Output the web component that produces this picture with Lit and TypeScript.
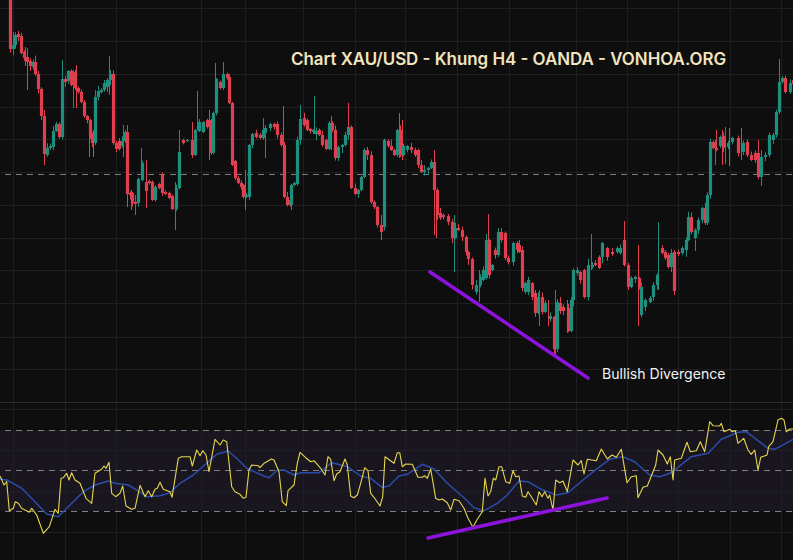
import { LitElement, html, css, svg } from "lit";
import { customElement } from "lit/decorators.js";

type C = [number, number, number, number];
// x, top, bottom, colour (1 green, 0 red)
const candles: C[] = [
  [10,0,49,0],[13,45,49,1],[15,35,45,1],[18,34,37,0],[21,36,53,0],[24,52,58,0],[27,57,62,0],[30,61,66,0],[33,62,67,1],[35,62,74,0],
  [38,74,89,0],[41,89,116,0],[44,116,154,0],[47,148,155,1],[50,146,148,1],[53,131,147,1],[56,124,131,1],[59,124,137,0],[62,79,137,1],[65,79,82,0],
  [68,71,81,1],[71,71,85,0],[75,72,88,0],[78,88,92,0],[81,92,102,0],[84,102,116,0],[87,116,120,0],[90,120,135,0],[92,135,143,0],[95,97,143,1],
  [98,91,97,1],[101,90,92,1],[104,83,90,1],[107,80,87,1],[110,74,80,1],[113,74,143,0],[116,143,149,0],[119,141,149,0],[122,141,146,1],[125,132,141,1],
  [127,132,194,0],[130,193,195,0],[132,193,203,0],[135,202,204,0],[138,179,203,1],[142,163,180,1],[146,182,191,0],[149,181,183,0],[152,182,200,0],[155,187,200,1],
  [159,184,188,0],[162,175,193,0],[165,192,194,0],[169,193,198,0],[172,196,209,0],[176,188,209,1],[179,152,188,1],[183,140,143,0],[187,140,141,1],[192,140,155,0],
  [195,130,155,1],[199,122,131,1],[203,122,132,1],[207,120,127,0],[211,120,153,0],[213,113,153,1],[216,79,113,1],[220,82,88,0],[223,74,88,1],[227,74,78,0],
  [229,77,103,0],[232,103,165,0],[235,161,178,0],[238,178,183,0],[241,183,187,0],[243,185,197,0],[246,195,197,1],[249,145,197,1],[252,134,145,1],[256,133,137,0],
  [260,135,138,0],[263,130,138,1],[265,128,133,1],[270,124,128,1],[274,124,127,0],[277,124,135,0],[281,135,145,0],[284,145,197,0],[287,197,205,0],[290,200,205,0],
  [291,185,205,1],[294,183,185,1],[297,140,184,1],[300,119,140,1],[304,118,125,0],[307,120,130,0],[310,129,131,0],[313,130,132,1],[316,131,134,1],[319,130,135,0],
  [322,135,145,0],[326,140,149,0],[329,123,149,1],[332,123,130,0],[335,130,158,0],[338,147,158,1],[342,145,147,1],[345,135,145,1],[348,127,135,1],[351,127,188,0],
  [355,188,194,0],[358,190,194,1],[361,177,190,1],[364,150,177,1],[367,150,155,0],[371,155,202,0],[374,202,207,0],[377,207,225,0],[381,225,232,0],[384,140,227,1],
  [388,141,146,0],[391,146,150,0],[394,150,155,0],[397,130,155,1],[400,130,155,0],[403,146,155,1],[407,146,150,1],[411,147,150,0],[415,150,155,0],[418,150,165,0],
  [421,165,172,0],[424,170,172,1],[428,168,170,1],[431,162,168,1],[434,162,190,0],[437,190,215,0],[440,213,218,0],[443,215,217,0],[448,216,222,0],[452,222,238,0],
  [455,228,238,1],[458,228,230,0],[462,230,237,0],[466,237,252,0],[468,252,259,0],[472,259,285,0],[476,285,292,1],[480,277,285,1],[483,270,280,1],[486,240,278,1],
  [489,240,275,0],[492,265,270,1],[495,250,255,0],[498,232,255,1],[501,232,240,0],[505,233,258,0],[508,258,262,0],[513,243,262,1],[517,243,250,0],[519,245,252,0],
  [522,250,288,0],[525,283,292,1],[528,280,292,1],[532,283,297,0],[535,293,313,0],[538,297,313,1],[542,297,312,0],[545,303,312,1],[550,316,319,1],
  [554,317,349,0],[557,302,349,1],[560,303,311,0],[563,307,311,0],[568,308,331,0],[571,300,331,1],[573,270,300,1],[577,270,273,1],[580,272,280,0],[584,270,297,0],
  [588,265,297,1],[592,265,267,1],[595,263,265,0],[599,257,268,0],[602,243,257,1],[607,248,257,0],[612,252,254,0],[617,248,252,1],[620,248,253,1],[624,240,265,0],
  [628,265,287,0],[631,278,287,1],[635,277,279,1],[639,278,287,0],[641,287,315,1],[645,300,307,1],[650,298,302,1],[653,285,297,1],[657,275,285,1],[662,248,253,0],
  [665,252,258,0],[668,255,267,0],[671,253,267,1],[674,252,291,0],[678,252,254,0],[682,248,253,1],[686,240,250,1],[688,217,240,1],[691,217,232,0],[695,230,238,1],
  [698,220,230,1],[702,208,220,1],[705,208,223,0],[707,195,223,1],[710,142,195,1],[713,142,148,0],[716,148,150,0],[720,137,146,1],[723,136,148,0],[728,143,147,1],
  [732,138,142,1],[738,138,153,0],[743,143,152,1],[747,142,155,0],[751,155,160,0],[755,153,160,0],[758,153,177,0],[761,157,177,1],[765,155,157,1],[769,135,155,1],
  [773,135,140,1],[776,112,135,1],[779,82,112,1],[782,78,82,1],[785,78,92,0],[790,83,92,1],[793,80,84,0],
];
// extra long wicks: x, top, bottom, colour
const wicks: C[] = [
  [13,32,55,1],[27,48,90,0],[25,47,66,0],[44,110,165,0],[62,60,137,1],[73,70,108,1],[76,65,108,0],[89,125,157,0],[93,130,157,0],[109,56,95,1],
  [123,125,157,1],[127,125,207,0],[131,190,210,0],[135,195,215,1],[141,148,180,1],[146,160,208,0],[175,182,230,1],[179,130,165,1],[197,91,130,1],[192,122,158,0],
  [209,110,160,0],[215,63,113,1],[223,62,90,1],[245,170,210,0],[263,118,140,1],[283,106,197,0],[300,105,145,1],[314,96,134,1],[331,116,150,0],[348,103,135,0],
  [381,215,240,0],[399,113,158,0],[402,120,160,0],[265,125,158,1],[434,150,235,0],[436,200,238,0],[488,214,262,0],[454,215,272,1],[479,270,302,1],[591,234,270,1],
  [624,221,265,0],[638,245,326,0],[658,222,290,1],[555,290,356,1],[539,290,326,1],[548,300,326,0],[567,300,333,0],[725,127,164,1],[761,150,186,1],
  [758,140,177,0],[779,59,90,1],[695,240,251,1],[741,128,160,0],[729,128,166,0],[715,140,165,1],[716,130,150,0],[722,130,165,0],
];

const px = (list: number[][], ox: number, oy: number) =>
  list.map(([x, y]) => `${(ox + x / 3).toFixed(1)},${(oy + y / 3).toFixed(1)}`).join(" ");

const y1: number[][] = [[0,228],[12,255],[20,245],[28,332],[40,325],[46,305],[55,310],[65,325],[88,337],[95,325],[110,345],[130,400],[148,380],[165,328],[175,340],[183,235],[190,233],[200,220],[207,240],[215,218],[225,240],[240,250],[258,295],[275,310],[285,220],[305,208],[312,198],[318,205],[327,187],[335,280],[347,290],[360,280],[368,258],[378,318],[395,328],[405,325],[420,256],[435,290],[445,272],[455,290],[465,268],[472,265],[480,247],[490,268],[510,275],[516,292],[535,175],[545,170],[570,170],[577,198],[590,150],[600,167],[608,152],[618,165],[627,215],[645,118],[660,135],[670,120],[680,125],[695,260],[705,275],[720,283],[730,295],[738,292],[747,210],[755,195],[775,197],[780,203],[792,190]];
const y2: number[][] = [[12,183],[22,177],[30,180],[45,215],[55,305],[67,317],[72,272],[90,255],[100,190],[108,157],[125,173],[140,185],[150,182],[170,205],[183,225],[192,170],[200,178],[210,242],[218,222],[228,215],[243,177],[250,195],[260,288],[270,293],[280,285],[290,250],[302,203],[312,212],[320,280],[330,292],[348,318],[356,290],[363,170],[390,190],[400,158],[407,158],[415,200],[425,192],[445,193],[450,205],[462,232],[475,232],[482,227],[490,235],[500,207],[515,295],[525,300],[535,297],[550,308],[560,330],[570,298],[585,302],[600,325],[612,355],[627,382],[640,358],[655,335],[663,235],[672,288],[680,275],[688,235],[695,240],[705,200],[713,200],[725,245],[737,250],[747,212],[755,230],[765,228],[775,288],[785,292],[792,275]];
const y3: number[][] = [[10,290],[25,315],[33,275],[42,290],[50,275],[60,295],[65,285],[75,330],[83,240],[95,248],[105,243],[118,275],[135,180],[150,195],[160,182],[168,222],[178,178],[205,182],[220,147],[238,177],[252,165],[265,172],[280,148],[297,248],[310,230],[325,227],[330,293],[345,262],[358,258],[383,195],[390,150],[405,165],[418,192],[427,170],[435,240],[440,180],[460,175],[477,127],[487,155],[505,152],[517,125],[530,155],[545,65],[555,77],[575,78],[580,70],[588,95],[605,88],[612,95],[622,92],[630,130],[647,115],[660,150],[670,163],[680,150],[690,210],[698,172],[717,165],[722,140],[735,125],[750,60],[760,55],[768,60],[775,95],[785,87],[795,87]];
const b1: number[][] = [[0,238],[20,240],[40,250],[65,265],[100,300],[140,342],[175,350],[200,325],[250,275],[285,255],[325,243],[345,250],[385,255],[410,270],[440,290],[480,287],[510,278],[540,250],[580,225],[620,190],[650,163],[685,153],[710,175],[740,205],[792,228]];
const b2: number[][] = [[15,233],[40,210],[60,210],[90,225],[110,218],[165,218],[205,188],[250,200],[290,228],[320,235],[355,262],[375,258],[405,228],[430,223],[475,193],[510,207],[550,250],[600,293],[630,323],[660,332],[700,310],[730,285],[765,243],[792,245]];
const b3: number[][] = [[40,268],[85,285],[120,278],[165,240],[215,200],[245,178],[285,170],[320,185],[365,225],[395,230],[430,218],[490,170],[540,160],[580,118],[630,97],[655,95],[720,145],[740,148],[795,118]];

const yellow = `${px(y1, 0, 400)} ${px(y2, 264, 400)} ${px(y3, 528, 400)}`;
const blue = `${px(b1, 0, 400)} ${px(b2, 264, 400)} ${px(b3, 528, 400)}`;

const gridX = [13,65,116,201,245,303,355,405,457,509,576,627,678,730,781];
const gridY = [8,41,74,107,139,172,205,238,270,303,337,369,409,450,491,532];
const dashed = [174,430,470,511];

const rnd = (i: number) => {
  const s = Math.sin(i * 12.9898) * 43758.5453;
  return s - Math.floor(s);
};

@customElement("app-root")
export class AppRoot extends LitElement {
  static styles = css`
    :host { display: block; width: 793px; height: 560px; background: #0e0e0f; overflow: hidden; }
    svg { display: block; }
    .grid { stroke: #1f1f21; stroke-width: 1; }
    .sep { stroke: #2c2c2e; stroke-width: 1; }
    .dash { stroke: #7f7f7f; stroke-width: 1; stroke-dasharray: 6 5; }
    .band { fill: #1a1620; }
    .up { fill: #1d8f7c; }
    .down { fill: #df3f4e; }
    .wup { stroke: #1d8f7c; stroke-width: 1; }
    .wdown { stroke: #df3f4e; stroke-width: 1; }
    .rsi { fill: none; stroke: #e6d64e; stroke-width: 1.1; stroke-linejoin: round; }
    .ma { fill: none; stroke: #2a4cab; stroke-width: 1.5; stroke-linejoin: round; }
    .div { stroke: #8c14da; stroke-width: 3.6; stroke-linecap: round; }
    .title { font: 600 16.9px Inter, "Liberation Sans", sans-serif; fill: #f2e4bd; }
    .note { font: 400 14.1px Inter, "Liberation Sans", sans-serif; fill: #f2f2f2; }
  `;

  render() {
    return html`<svg width="793" height="560" viewBox="0 0 793 560">
      ${svg`<rect class="band" x="0" y="430" width="793" height="81"></rect>`}
      ${gridX.map((x) => svg`<line class="grid" x1=${x + 0.5} x2=${x + 0.5} y1="0" y2="560"></line>`)}
      ${gridY.map((y) => svg`<line class="grid" x1="0" x2="793" y1=${y + 0.5} y2=${y + 0.5}></line>`)}
      ${svg`<line class="sep" x1="0" x2="793" y1="402.5" y2="402.5"></line>`}
      ${dashed.map((y) => svg`<line class="dash" x1="5" x2="793" y1=${y + 0.5} y2=${y + 0.5}></line>`)}
      ${candles.map(([x, t, b, c], i) => {
        const up = rnd(i + 1) * rnd(i + 7) * 6 + 1;
        const dn = rnd(i + 3) * rnd(i + 11) * 6 + 1;
        return svg`<line class=${c ? "wup" : "wdown"} x1=${x + 0.5} x2=${x + 0.5} y1=${t - up} y2=${b + dn}></line>`;
      })}
      ${wicks.map(([x, t, b, c]) => svg`<line class=${c ? "wup" : "wdown"} x1=${x + 0.5} x2=${x + 0.5} y1=${t} y2=${b}></line>`)}
      ${candles.map(([x, t, b, c]) => svg`<rect class=${c ? "up" : "down"} x=${x - 1.1} y=${t} width="3.2" height=${Math.max(b - t, 1)}></rect>`)}
      ${svg`<polyline class="ma" points=${blue}></polyline>`}
      ${svg`<polyline class="rsi" points=${yellow}></polyline>`}
      ${svg`<line class="div" x1="430" y1="272" x2="588" y2="378"></line>`}
      ${svg`<line class="div" x1="428" y1="538" x2="607" y2="498"></line>`}
      ${svg`<text class="title" x="291" y="65">Chart XAU/USD - Khung H4 - OANDA - VONHOA.ORG</text>`}
      ${svg`<text class="note" x="602" y="379">Bullish Divergence</text>`}
    </svg>`;
  }
}
